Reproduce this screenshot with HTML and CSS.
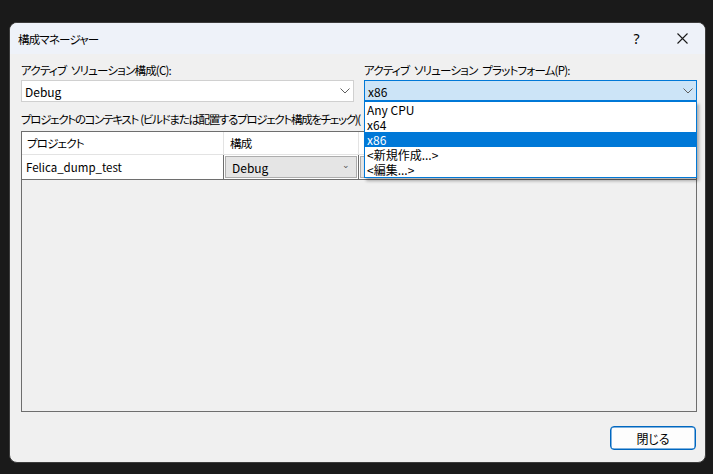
FILE: index.html
```html
<!DOCTYPE html>
<html>
<head>
<meta charset="utf-8">
<title>構成マネージャー</title>
<link rel="stylesheet" href="styles.css">
</head>
<body>
<div class="window">
  <div class="titlebar">
    <span class="title">構成マネージャー</span>
    <span class="tb-btn help">?</span>
    <span class="tb-btn close">
      <svg width="11" height="11" viewBox="0 0 11 11"><path d="M0.5 0.5L10.5 10.5M10.5 0.5L0.5 10.5" stroke="#1a1a1a" stroke-width="1.1" fill="none"/></svg>
    </span>
  </div>
  <div class="content">
    <div class="combo-row">
      <div class="field">
        <div class="label">アクティブ ソリューション構成(C):</div>
        <div class="combo">
          <span>Debug</span>
          <svg class="arrow" width="10" height="6" viewBox="0 0 10 6"><path d="M0.5 0.5L5 5L9.5 0.5" stroke="#5f5f5f" fill="none"/></svg>
        </div>
      </div>
      <div class="field">
        <div class="label">アクティブ ソリューション プラットフォーム(P):</div>
        <div class="combo open">
          <span>x86</span>
          <svg class="arrow" width="10" height="6" viewBox="0 0 10 6"><path d="M0.5 0.5L5 5L9.5 0.5" stroke="#5f5f5f" fill="none"/></svg>
          <ul class="dropdown">
            <li>Any CPU</li>
            <li>x64</li>
            <li class="selected">x86</li>
            <li>&lt;新規作成...&gt;</li>
            <li>&lt;編集...&gt;</li>
          </ul>
        </div>
      </div>
    </div>
    <div class="label context">プロジェクトのコンテキスト (ビルドまたは配置するプロジェクト構成をチェック)(</div>
    <div class="grid">
      <div class="row head">
        <div class="cell c1">プロジェクト</div>
        <div class="cell c2">構成</div>
        <div class="cell c3"></div>
      </div>
      <div class="row">
        <div class="cell c1 name">Felica_dump_test</div>
        <div class="cell c2">
          <div class="cell-combo"><span>Debug</span><span class="small-arrow">&#8964;</span></div>
        </div>
        <div class="cell c3">
          <div class="cell-combo"></div>
        </div>
      </div>
    </div>
    <div class="footer">
      <button class="btn">閉じる</button>
    </div>
  </div>
</div>
</body>
</html>
```

FILE: styles.css
```css
body {
  margin: 0;
  background: #1a1a1a;
  font-family: "Noto Sans CJK JP", "Noto Sans", sans-serif;
  font-size: 12px;
  color: #000;
  font-feature-settings: "palt";
}

.window {
  margin: 22px 0 0 9px;
  width: 697px;
  height: 441px;
  box-sizing: border-box;
  background: #f0f0f0;
  border: 1px solid #3c3c3c;
  border-radius: 8px;
  overflow: hidden;
  display: flex;
  flex-direction: column;
}

.titlebar {
  height: 31px;
  flex: none;
  background: #eef2f9;
  display: flex;
  align-items: center;
  padding-left: 8px;
}

.title {
  flex: 1;
  font-size: 11.5px;
  letter-spacing: -0.8px;
}

.tb-btn {
  width: 45px;
  height: 31px;
  display: flex;
  align-items: center;
  justify-content: center;
}

.tb-btn.help {
  font-family: "Noto Sans", sans-serif;
  font-size: 14px;
}

.tb-btn.close {
  width: 46px;
}

.content {
  flex: 1;
  padding: 6px 8px 0 11px;
  display: flex;
  flex-direction: column;
}

.combo-row {
  display: flex;
  gap: 10px;
}

.field {
  flex: 1;
}

.label {
  line-height: 20px;
  height: 20px;
  white-space: nowrap;
  font-size: 11.5px;
  letter-spacing: -0.8px;
  word-spacing: 3px;
}

.combo {
  position: relative;
  height: 22px;
  box-sizing: border-box;
  background: #fff;
  border: 1px solid #d0d0d0;
  display: flex;
  align-items: center;
  padding-left: 3px;
}

.combo span {
  flex: 1;
}

.combo .arrow {
  margin-right: 3px;
}

.combo.open {
  background: #cce4f7;
  border-color: #0078d7;
  border-bottom-width: 2px;
}

.combo.open span {
  margin-top: 1px;
}

.dropdown {
  position: absolute;
  left: -1px;
  right: -1px;
  top: 20px;
  margin: 0;
  padding: 0;
  list-style: none;
  background: #fff;
  border: 1px solid #0078d7;
  box-shadow: 2px 3px 3px rgba(0, 0, 0, 0.3);
  z-index: 5;
}

.dropdown li {
  height: 15px;
  line-height: 15px;
  padding-left: 2px;
}

.dropdown li.selected {
  background: #0078d7;
  color: #fff;
}

.context {
  margin-top: 7px;
  margin-bottom: 2px;
  width: max-content;
  letter-spacing: -1.3px;
  word-spacing: 1px;
}

.grid {
  height: 281px;
  box-sizing: border-box;
  border: 1px solid #6e6e6e;
  background: #f0f0f0;
}

.row {
  display: flex;
  height: 25px;
  background: #fff;
  border-bottom: 1px solid #6e6e6e;
  box-sizing: border-box;
}

.row.head {
  height: 23px;
  border-bottom: 1px solid #e3e3e3;
  font-size: 11.5px;
  letter-spacing: -0.8px;
}

.cell {
  box-sizing: border-box;
  border-right: 1px solid #6e6e6e;
  padding-left: 4px;
  display: flex;
  align-items: center;
  white-space: nowrap;
  overflow: hidden;
}

.cell.name {
  font-size: 11.5px;
}

.row.head .cell {
  border-right-color: #e3e3e3;
  padding-left: 5px;
}

.c1 { width: 202px; }
.c2 { width: 135px; }
.c3 { flex: 1; border-right: none; }

.row .c2, .row .c3 {
  padding: 1px;
}

.row.head .c2, .row.head .c3 {
  padding-left: 6px;
}

.cell-combo {
  flex: 1;
  height: 22px;
  box-sizing: border-box;
  background: #e5e5e5;
  border: 1px solid #adadad;
  display: flex;
  align-items: center;
  padding-left: 6px;
}

.cell-combo span:first-child {
  flex: 1;
}

.small-arrow {
  font-size: 9px;
  color: #555;
  margin-right: 6px;
  margin-top: -6px;
}

.footer {
  display: flex;
  justify-content: flex-end;
  padding-top: 14px;
  padding-right: 1px;
}

.btn {
  width: 86px;
  height: 24px;
  background: #fdfdfd;
  border: 1px solid #0067c0;
  box-shadow: inset 0 0 0 0.5px #0067c0;
  border-radius: 4px;
  font-family: "Noto Sans CJK JP", sans-serif;
  font-size: 12px;
  font-feature-settings: "palt";
  color: #000;
  padding: 0;
}
```
